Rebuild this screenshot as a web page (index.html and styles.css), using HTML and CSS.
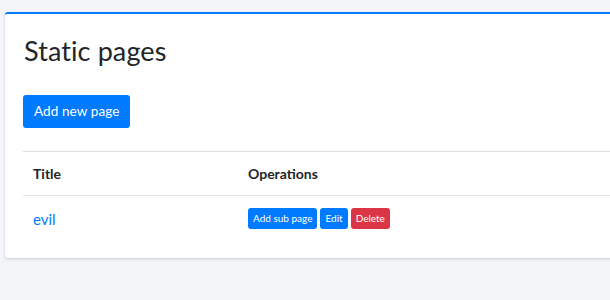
FILE: index.html
```html
<!DOCTYPE html>
<html>
<head>
<meta charset="utf-8">
<link rel="stylesheet" href="styles.css">
</head>
<body>
<div class="card">
  <h1 class="title">Static pages</h1>
  <a class="btn btn-primary btn-lg" href="#">Add new page</a>
  <table class="table">
    <thead>
      <tr><th class="col-title">Title</th><th>Operations</th></tr>
    </thead>
    <tbody>
      <tr>
        <td><a class="link" href="#">evil</a></td>
        <td class="ops"><a class="btn btn-primary btn-xs" href="#">Add sub page</a><a class="btn btn-primary btn-xs" href="#">Edit</a><a class="btn btn-danger btn-xs" href="#">Delete</a></td>
      </tr>
    </tbody>
  </table>
</div>
</body>
</html>
```
FILE: styles.css
```css
html, body {
  margin: 0;
  padding: 0;
}
body {
  background: #f4f5f8;
  font-family: Lato, "Noto Sans", sans-serif;
  color: #212529;
  overflow: hidden;
  width: 610px;
  height: 300px;
}
.card {
  margin: 12px -150px 0 5px;
  background: #fff;
  border-top: 2px solid #007bff;
  border-radius: 3px;
  box-shadow: 0 1px 3px rgba(0, 0, 0, 0.18);
  padding: 20px 18px 17px 18px;
}
.title {
  margin: 0 0 27px 1px;
  font-size: 27px;
  font-weight: 400;
  line-height: 34px;
  letter-spacing: 0.1px;
}
.btn {
  display: inline-block;
  text-decoration: none;
  color: #fff;
  border-radius: 3px;
  box-sizing: border-box;
  text-align: center;
}
.btn-primary {
  background: #007bff;
}
.btn-danger {
  background: #dc3545;
}
.btn-lg {
  height: 33px;
  line-height: 33px;
  padding: 0 11px;
  font-size: 13.5px;
  letter-spacing: 0.1px;
}
.btn-xs {
  height: 21px;
  line-height: 21px;
  padding: 0 5px;
  font-size: 10px;
  vertical-align: middle;
  margin-right: 3px;
}
.table {
  margin-top: 23px;
  width: 100%;
  border-collapse: collapse;
}
.table th, .table td {
  text-align: left;
  padding: 0 10px;
  border-top: 1px solid #dee2e6;
}
.table th {
  height: 43px;
  font-size: 14px;
  font-weight: 700;
  border-bottom: 1px solid #dee2e6;
}
.table td {
  height: 45px;
  font-size: 15px;
  border-top: none;
}
.col-title {
  width: 195px;
}
.link {
  color: #007bff;
  text-decoration: none;
}
.table td.ops {
  font-size: 0;
}
```
